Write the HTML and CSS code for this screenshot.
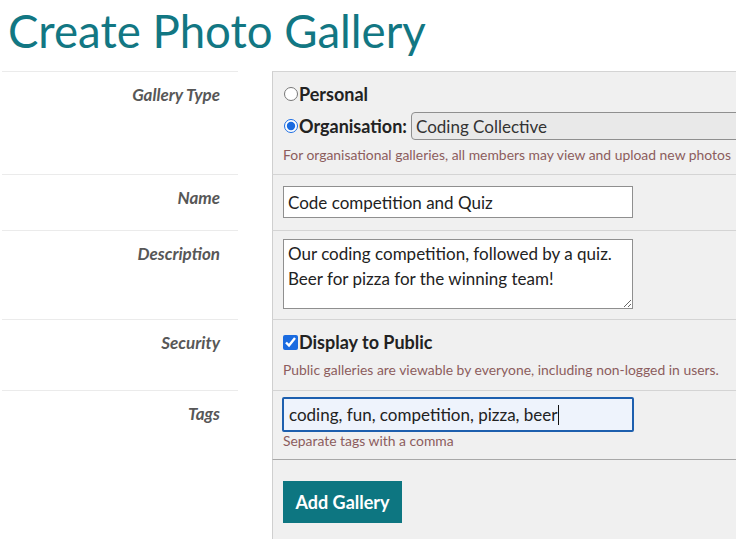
FILE: index.html
```html
<!DOCTYPE html>
<html lang="en">
<head>
<meta charset="utf-8">
<title>Create Photo Gallery</title>
<link rel="stylesheet" href="styles.css">
</head>
<body>
<h1 class="title">Create Photo Gallery</h1>
<form class="form">
  <div class="label">Gallery Type</div>
  <div class="field">
    <label class="choice"><input type="radio" name="type" class="radio">Personal</label>
    <div class="org-line">
      <label class="choice"><input type="radio" name="type" class="radio" checked>Organisation:</label>
      <select class="select"><option>Coding Collective</option></select>
    </div>
    <div class="help">For organisational galleries, all members may view and upload new photos</div>
  </div>

  <div class="label">Name</div>
  <div class="field field-name">
    <input class="text-input" type="text" value="Code competition and Quiz">
  </div>

  <div class="label">Description</div>
  <div class="field field-desc">
    <textarea class="textarea">Our coding competition, followed by a quiz. Beer for pizza for the winning team!</textarea>
  </div>

  <div class="label">Security</div>
  <div class="field field-sec">
    <label class="choice"><input type="checkbox" class="check" checked>Display to Public</label>
    <div class="help help-sec">Public galleries are viewable by everyone, including non-logged in users.</div>
  </div>

  <div class="label">Tags</div>
  <div class="field field-tags">
    <div class="tag-input">coding, fun, competition, pizza, beer<span class="caret"></span></div>
    <div class="help help-tags">Separate tags with a comma</div>
  </div>

  <div class="label label-last"></div>
  <div class="field field-submit">
    <button type="button" class="button">Add Gallery</button>
  </div>
</form>
</body>
</html>
```
FILE: styles.css
```css
html, body {
  margin: 0;
  padding: 0;
  overflow: hidden;
  background: #ffffff;
}
body {
  font-family: Lato, "Open Sans", sans-serif;
  color: #222;
  width: 736px;
  height: 539px;
}
.title {
  margin: 4px 0 13px 8px;
  font-family: Lato, sans-serif;
  font-weight: 400;
  font-size: 45.6px;
  line-height: 54px;
  color: #127783;
}
.form {
  display: grid;
  grid-template-columns: 236px 500px;
  column-gap: 34px;
  margin-left: 2px;
}
.label {
  border-top: 1px solid #ebebeb;
  text-align: right;
  padding: 11px 18px 0 0;
  font-style: italic;
  font-weight: 700;
  font-size: 17px;
  line-height: 24px;
  color: #575757;
}
.label-last {
  border-top: none;
}
.field {
  background: #f0f0f0;
  border-left: 1px solid #cfcfcf;
  border-top: 1px solid #d4d4d4;
  padding: 10px 0 10px 10px;
}
.choice {
  display: flex;
  align-items: center;
  font-weight: 700;
  font-size: 18px;
  line-height: 24px;
  color: #222;
}
.radio {
  margin: 0 1px 0 1px;
  width: 14px;
  height: 14px;
  accent-color: #1a6be0;
}
.org-line {
  display: flex;
  align-items: center;
  margin-top: 6px;
  gap: 4px;
}
.select {
  width: 400px;
  height: 28px;
  font-family: Lato, sans-serif;
  font-size: 17px;
  color: #333;
  background: #e9e9e9;
  border: 1px solid #8f8f8f;
  border-radius: 4px 0 0 4px;
  padding: 0 4px;
  appearance: none;
}
.help {
  margin-top: 6px;
  font-size: 13.9px;
  line-height: 18px;
  color: #8c5d5d;
}
.field-name {
  padding-top: 11px;
  padding-bottom: 12px;
}
.text-input {
  box-sizing: border-box;
  display: block;
  width: 350px;
  height: 32px;
  border: 1px solid #8f8f8f;
  border-radius: 0;
  background: #fff;
  font-family: Lato, sans-serif;
  font-size: 17px;
  color: #222;
  padding: 0 4px;
  margin: 0;
}
.field-desc {
  padding-top: 8px;
  padding-bottom: 10px;
}
.textarea {
  box-sizing: border-box;
  display: block;
  width: 350px;
  height: 70px;
  border: 1px solid #8f8f8f;
  background: #fff;
  font-family: Lato, sans-serif;
  font-size: 17px;
  line-height: 25px;
  color: #222;
  padding: 1px 4px;
  margin: 0;
}
.field-sec {
  padding-top: 10px;
  padding-bottom: 11px;
}
.check {
  margin: 0 1px 0 0;
  width: 15px;
  height: 15px;
  accent-color: #1a6be0;
}
.help-sec {
  margin-top: 7px;
}
.field-tags {
  padding-top: 6px;
  padding-bottom: 9px;
}
.tag-input {
  box-sizing: border-box;
  width: 352px;
  height: 35px;
  margin-left: -1px;
  border: 2px solid #1d5fae;
  border-radius: 2px;
  background: #eef3fc;
  font-size: 17px;
  line-height: 31px;
  padding: 0 5px;
  color: #222;
  display: flex;
  align-items: center;
}
.caret {
  display: inline-block;
  width: 1px;
  height: 20px;
  background: #111;
  margin-left: 1px;
}
.help-tags {
  margin-top: 0;
}
.field-submit {
  border-top: 1px solid #a8a8a8;
  padding-top: 21px;
  padding-bottom: 30px;
}
.button {
  display: block;
  width: 119px;
  height: 42px;
  background: #0d7681;
  color: #fff;
  border: none;
  border-radius: 0;
  font-family: Lato, sans-serif;
  font-weight: 700;
  font-size: 18px;
  padding: 0;
}
```
